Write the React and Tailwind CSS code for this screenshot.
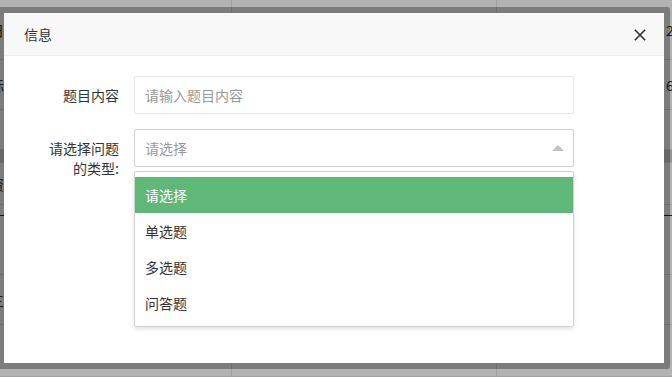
const ROWS = [
  { h: 60, l: "日", r: "2(" },
  { h: 50, l: "际", r: "6" },
  { h: 40 },
  { h: 13, band: true },
  { h: 42, l: "资" },
  { h: 11, navy: true },
  { h: 59 },
  { h: 50, l: "三" },
  { h: 52 },
];

const OPTIONS = ["请选择", "单选题", "多选题", "问答题"];

function PageBehind() {
  return (
    <div className="flex flex-col bg-white text-[14px] text-[#333]">
      {ROWS.map((row, i) => (
        <div
          key={i}
          style={{ height: row.h }}
          className={
            "flex shrink-0 items-center " +
            (row.band ? "bg-[#d6d6d6] " : "") +
            (row.navy ? "border-b border-b-[#1f2a44] " : "border-b border-b-[#e6e6e6] ")
          }
        >
          <div className="flex h-full w-[232px] shrink-0 items-center overflow-hidden border-r border-r-[#e6e6e6]">
            {row.l && <span className="-ml-[10px] leading-5">{row.l}</span>}
          </div>
          <div className="h-full w-[265px] shrink-0 border-r border-r-[#e6e6e6]" />
          <div className="flex h-full flex-1 items-center overflow-hidden pl-[169px]">
            {row.r && <span className="whitespace-nowrap leading-5">{row.r}</span>}
          </div>
        </div>
      ))}
    </div>
  );
}

export default function App() {
  return (
    <div
      className="relative h-[377px] w-[672px] overflow-hidden"
      style={{ fontFamily: '"Noto Sans CJK SC", "Noto Sans", sans-serif' }}
    >
      <PageBehind />
      <div className="absolute inset-0 bg-black/30" />

      {/* layer dialog */}
      <div className="absolute left-[-2px] top-[7px] h-[362px] w-[672px] rounded-[3px] border-[6px] border-black/30 bg-white bg-clip-padding">
        <div className="relative h-[43px] border-b border-b-[#eeeeee] bg-[#f8f8f8] pl-5 text-[14px] leading-[42px] text-[#333]">
          信息
          <svg
            className="absolute right-[18px] top-[16px]"
            width="12"
            height="12"
            viewBox="0 0 12 12"
            fill="none"
            stroke="#2f2f2f"
            strokeWidth="1.6"
          >
            <path d="M0.8 0.8 L11.2 11.2 M11.2 0.8 L0.8 11.2" />
          </svg>
        </div>

        <div className="px-5 pt-5 text-[14px] text-[#333]">
          <div className="mb-[15px] flex">
            <label className="w-[110px] shrink-0 px-[15px] py-[9px] text-right leading-5">题目内容</label>
            <div className="flex h-[38px] w-[440px] items-center rounded-[2px] border border-[#e6e6e6] pl-[10px] text-[#999]">
              请输入题目内容
            </div>
          </div>

          <div className="flex">
            <label className="w-[110px] shrink-0 px-[15px] py-[9px] text-right leading-5">请选择问题的类型:</label>
            <div className="relative w-[440px]">
              <div className="relative flex h-[38px] items-center rounded-[2px] border border-[#d2d2d2] pl-[10px] text-[#999]">
                请选择
                <span className="absolute right-[9px] top-[15px] h-0 w-0 border-x-[6px] border-b-[6px] border-x-transparent border-b-[#c2c2c2]" />
              </div>
              <div className="absolute left-0 right-0 top-[42px] rounded-[2px] border border-[#d2d2d2] bg-white py-[5px] shadow-[0_2px_4px_rgba(0,0,0,0.12)]">
                {OPTIONS.map((o, i) => (
                  <div
                    key={o}
                    className={
                      "h-9 px-[10px] leading-9 " +
                      (i === 0 ? "bg-[#5fb878] text-white" : "text-[#333]")
                    }
                  >
                    {o}
                  </div>
                ))}
              </div>
            </div>
          </div>
        </div>
      </div>
    </div>
  );
}
